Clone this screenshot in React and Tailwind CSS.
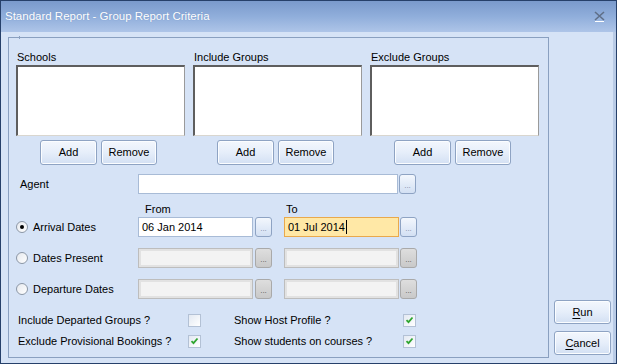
import React from 'react';

const font = { fontFamily: '"Liberation Sans", Arial, sans-serif' };

const Btn = ({ children, className = '' }) => (
  <div
    className={`flex items-center justify-center rounded-[3px] border border-[#8ea3c3] bg-gradient-to-b from-[#f3f7fd] via-[#e6eefa] to-[#d3e0f3] text-[11px] text-black shadow-[inset_0_0_0_1px_#fbfdff] ${className}`}
  >
    {children}
  </div>
);

const Ellipsis = ({ disabled }) => (
  <div
    className={`flex h-[20px] w-[17px] items-end justify-center rounded-[3px] border pb-[3px] text-[8px] leading-none ${
      disabled
        ? 'border-[#a9a9a9] bg-gradient-to-b from-[#dedede] to-[#c9c9c9] text-[#555]'
        : 'border-[#8ea3c3] bg-gradient-to-b from-[#f3f7fd] to-[#d3e0f3] text-[#7a8aa0]'
    }`}
  >
    ...
  </div>
);

const Input = ({ value, className = '', disabled, focused, width }) => (
  <div
    className={`flex h-[20px] items-center border px-[3px] text-[11px] text-black ${width} ${
      disabled
        ? 'border-[#bdbdbd] bg-[#f3f3f3] shadow-[inset_0_0_0_2px_#e2e2e2]'
        : focused
        ? 'border-[#e9a94c] bg-[#ffe8a6]'
        : 'border-[#a8bbd6] bg-white'
    } ${className}`}
  >
    {value}
    {focused && <span className="ml-[1px] inline-block h-[14px] w-px bg-black" />}
  </div>
);

const Radio = ({ checked }) => (
  <div className="flex h-[12px] w-[12px] items-center justify-center rounded-full border border-[#8c97a6] bg-gradient-to-br from-[#e6e9ee] to-white">
    {checked && <div className="h-[4px] w-[4px] rounded-full bg-black" />}
  </div>
);

const Check = ({ checked }) => (
  <div className="flex h-[13px] w-[13px] items-center justify-center border border-[#b3c1d5] bg-gradient-to-br from-[#e3e9f2] to-white">
    {checked && (
      <svg width="9" height="8" viewBox="0 0 9 8">
        <path d="M1.5 4.2 L3.5 6.2 L7.5 1.5" fill="none" stroke="#2fa52f" strokeWidth="1.8" />
      </svg>
    )}
  </div>
);

const ListCol = ({ label }) => (
  <div className="flex w-[169px] flex-col">
    <div className="h-[15px] pl-[1px] text-[11px] leading-[15px]">{label}</div>
    <div className="h-[71px] border-t-2 border-l-2 border-r border-b border-t-[#5e5e5e] border-l-[#5e5e5e] border-r-[#9a9a9a] border-b-[#d9d6cf] bg-white" />
    <div className="mt-[4px] flex gap-[4px] pl-[24px]">
      <Btn className="h-[25px] w-[57px]">Add</Btn>
      <Btn className="h-[25px] w-[56px]">Remove</Btn>
    </div>
  </div>
);

const DateRow = ({ label, checked, from, to, disabled, focused }) => (
  <div className="flex h-[20px] items-center">
    <div className="flex w-[122px] items-center gap-[5px]">
      <Radio checked={checked} />
      <span className="text-[11px]">{label}</span>
    </div>
    <Input value={from} disabled={disabled} width="w-[115px]" />
    <div className="ml-[2px]">
      <Ellipsis disabled={disabled} />
    </div>
    <Input value={to} disabled={disabled} focused={focused} width="w-[115px]" className="ml-[12px]" />
    <div className="ml-[1px]">
      <Ellipsis disabled={disabled} />
    </div>
  </div>
);

const CheckRow = ({ a, aChecked, b, bChecked }) => (
  <div className="flex h-[14px] items-center text-[11px]">
    <span className="w-[170px]">{a}</span>
    <Check checked={aChecked} />
    <span className="ml-[33px] w-[169px]">{b}</span>
    <Check checked={bChecked} />
  </div>
);

export default function App() {
  return (
    <div style={font} className="flex h-[364px] w-[617px] flex-col border border-[#26406a] bg-[#d6e3f6] text-black">
      <div className="flex h-[31px] items-center justify-between bg-gradient-to-b from-[#7a9acc] via-[#90aedb] to-[#aec5e8] pl-[4px] pr-[11px]">
        <span className="text-[11.5px] text-white [text-shadow:0_0_1px_#6d8cbd]">Standard Report - Group Report Criteria</span>
        <svg width="11" height="11" viewBox="0 0 11 11">
          <path d="M1 1 L10 9 M10 1 L1 9" stroke="#5f6f88" strokeWidth="1.6" />
          <path d="M1 10.5 H10" stroke="#ffffff" strokeWidth="1" />
        </svg>
      </div>
      <div className="flex flex-1 pl-[7px] pt-[5px] pb-[5px] shadow-[inset_-3px_0_0_#b9cbe6]">
        <div className="relative flex h-[321px] w-[541px] flex-col border border-[#8aa0c0] pl-[7px] pt-[12px]">
          <div className="absolute left-[10px] top-[-2px] h-[3px] w-px bg-[#8aa0c0]" />
          <div className="flex gap-[8px]">
            <ListCol label="Schools" />
            <ListCol label="Include Groups" />
            <ListCol label="Exclude Groups" />
          </div>
          <div className="mt-[9px] flex h-[20px] items-center">
            <span className="w-[122px] pl-[4px] text-[11px]">Agent</span>
            <Input value="" width="w-[260px]" />
            <div className="ml-[1px]">
              <Ellipsis />
            </div>
          </div>
          <div className="mt-[8px] flex h-[14px] items-center text-[11px]">
            <span className="ml-[129px] w-[141px]">From</span>
            <span>To</span>
          </div>
          <div className="mt-[1px]">
            <DateRow label="Arrival Dates" checked from="06 Jan 2014" to="01 Jul 2014" focused />
          </div>
          <div className="mt-[11px]">
            <DateRow label="Dates Present" disabled />
          </div>
          <div className="mt-[11px]">
            <DateRow label="Departure Dates" disabled />
          </div>
          <div className="mt-[14px] flex flex-col gap-[7px] pl-[2px]">
            <CheckRow a="Include Departed Groups ?" b="Show Host Profile ?" bChecked />
            <CheckRow a="Exclude Provisional Bookings ?" aChecked b="Show students on courses ?" bChecked />
          </div>
        </div>
        <div className="ml-[5px] flex flex-col justify-end gap-[7px] pb-[3px]">
          <Btn className="h-[24px] w-[57px]">
            <span className="underline underline-offset-2">R</span>un
          </Btn>
          <Btn className="h-[24px] w-[57px]">
            <span className="underline underline-offset-2">C</span>ancel
          </Btn>
        </div>
      </div>
    </div>
  );
}
